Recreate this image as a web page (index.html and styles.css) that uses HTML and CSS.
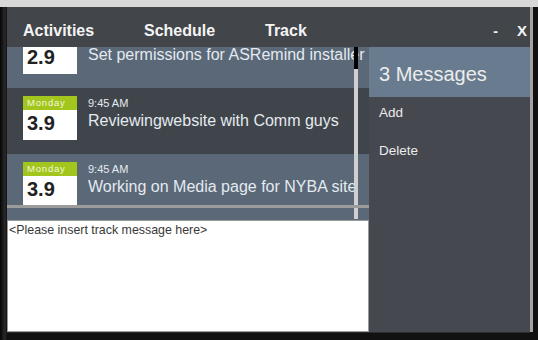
FILE: index.html
```html
<!DOCTYPE html>
<html lang="en">

<head>
    <meta charset="UTF-8">
    <meta name="viewport" content="width=device-width, initial-scale=1.0">
    <title>ASRemind Track</title>
    <link rel="stylesheet" href="styles.css">
</head>

<body>
    <div class="frame">
        <div class="window">
            <!-- title bar with tabs -->
            <div class="titlebar">
                <nav class="tabs">
                    <span class="tab">Activities</span>
                    <span class="tab">Schedule</span>
                    <span class="tab">Track</span>
                </nav>
                <div class="controls">
                    <span class="min">-</span>
                    <span class="close">X</span>
                </div>
            </div>

            <div class="content">
                <div class="track">
                    <!-- track list, scrolled a little -->
                    <div class="list">
                        <div class="items">
                            <div class="item slate">
                                <div class="date">
                                    <div class="day">Monday</div>
                                    <div class="num">2.9</div>
                                </div>
                                <div class="info">
                                    <div class="time">9:45 AM</div>
                                    <div class="msg">Set permissions for ASRemind installer</div>
                                </div>
                            </div>
                            <div class="item dark">
                                <div class="date">
                                    <div class="day">Monday</div>
                                    <div class="num">3.9</div>
                                </div>
                                <div class="info">
                                    <div class="time">9:45 AM</div>
                                    <div class="msg">Reviewingwebsite with Comm guys</div>
                                </div>
                            </div>
                            <div class="item slate">
                                <div class="date">
                                    <div class="day">Monday</div>
                                    <div class="num">3.9</div>
                                </div>
                                <div class="info">
                                    <div class="time">9:45 AM</div>
                                    <div class="msg">Working on Media page for NYBA site</div>
                                </div>
                            </div>
                        </div>
                        <div class="vscroll"><div class="thumb"></div></div>
                        <div class="hscroll"></div>
                    </div>
                    <textarea class="note">&lt;Please insert track message here&gt;</textarea>
                </div>

                <aside class="side">
                    <div class="side-head">3 Messages</div>
                    <ul class="actions">
                        <li>Add</li>
                        <li>Delete</li>
                    </ul>
                </aside>
            </div>
        </div>
    </div>
</body>

</html>
```

FILE: styles.css
```css
/* colours */
:root {
    --bar: #42454a;
    --slate: #5a6878;
    --dark: #40454b;
    --panel: #45484e;
    --head: #697c8f;
    --lime: #a2c61e;
}

body {
    margin: 0;
    background: #111;
    font-family: 'Liberation Sans', Arial, sans-serif;
}

/* outer frame */
.frame {
    width: 538px;
    height: 340px;
    box-sizing: border-box;
    border-top: 7px solid #d8d8d8;
    background: linear-gradient(90deg, #050505 0, #2a2a2a 5px, #111 7px);
    padding-left: 7px;
}

.window {
    width: 523px;
    height: 325px;
    background: var(--bar);
    display: flex;
    flex-direction: column;
    box-shadow: 3px 0 0 #a3a3a3, 0 1px 0 #2a2a2a;
}

/* title bar */
.titlebar {
    height: 40px;
    flex-shrink: 0;
    display: flex;
    justify-content: space-between;
    color: #f4f4f4;
    font-weight: bold;
}

.tabs {
    display: flex;
    flex-shrink: 0;
    padding: 14px 0 0 16px;
}

.tab {
    width: 121px;
    flex-shrink: 0;
    font-size: 16px;
    line-height: 20px;
    white-space: nowrap;
}

.controls {
    display: flex;
    gap: 19px;
    padding: 14px 3px 0 0;
    font-size: 15px;
    line-height: 20px;
}

.controls .min {
    font-size: 14px;
}

/* body */
.content {
    flex: 1;
    display: flex;
}

.track {
    width: 362px;
    display: flex;
    flex-direction: column;
}

.list {
    height: 173px;
    position: relative;
    overflow: hidden;
}

.items {
    margin-top: -25px;
}

.item {
    height: 66px;
    box-sizing: border-box;
    padding: 8px 0 0 16px;
    display: flex;
}

.item.slate {
    background: var(--slate);
}

.item.dark {
    background: var(--dark);
}

.date {
    width: 54px;
    flex-shrink: 0;
}

.day {
    height: 14px;
    background: var(--lime);
    color: #f2f7dc;
    font-size: 9.5px;
    line-height: 14px;
    letter-spacing: 0.8px;
    padding-left: 4px;
}

.num {
    height: 30px;
    background: #fff;
    color: #222;
    font-size: 20px;
    font-weight: bold;
    line-height: 26px;
    padding-left: 4px;
}

.info {
    margin-left: 11px;
    padding-top: 1px;
    color: #e4eaf0;
    white-space: nowrap;
}

.time {
    font-size: 11px;
    line-height: 13px;
}

.msg {
    margin-top: 1px;
    font-size: 16px;
    line-height: 20px;
}

/* fake scrollbars */
.vscroll {
    position: absolute;
    left: 347px;
    top: 0;
    width: 4px;
    height: 172px;
    background: #cfcfcf;
}

.thumb {
    height: 22px;
    background: #000;
}

.hscroll {
    position: absolute;
    left: 0;
    right: 0;
    top: 158px;
    height: 3px;
    background: #9c9c9c;
}

/* message input */
.note {
    height: 112px;
    margin: 0;
    box-sizing: border-box;
    border: 1px solid #9a9a9a;
    padding: 2px 1px;
    resize: none;
    overflow: hidden;
    font-family: 'Liberation Sans', Arial, sans-serif;
    font-size: 12.4px;
    line-height: 14px;
    color: #383838;
    background: #fff;
}

/* right panel */
.side {
    flex: 1;
    background: var(--panel);
    color: #ececec;
}

.side-head {
    height: 50px;
    box-sizing: border-box;
    background: var(--head);
    padding: 15px 0 0 10px;
    font-size: 20px;
    line-height: 24px;
}

.actions {
    list-style: none;
    margin: 0;
    padding: 0;
}

.actions li {
    padding: 8px 0 14px 10px;
    font-size: 13.5px;
    line-height: 16px;
}
```
